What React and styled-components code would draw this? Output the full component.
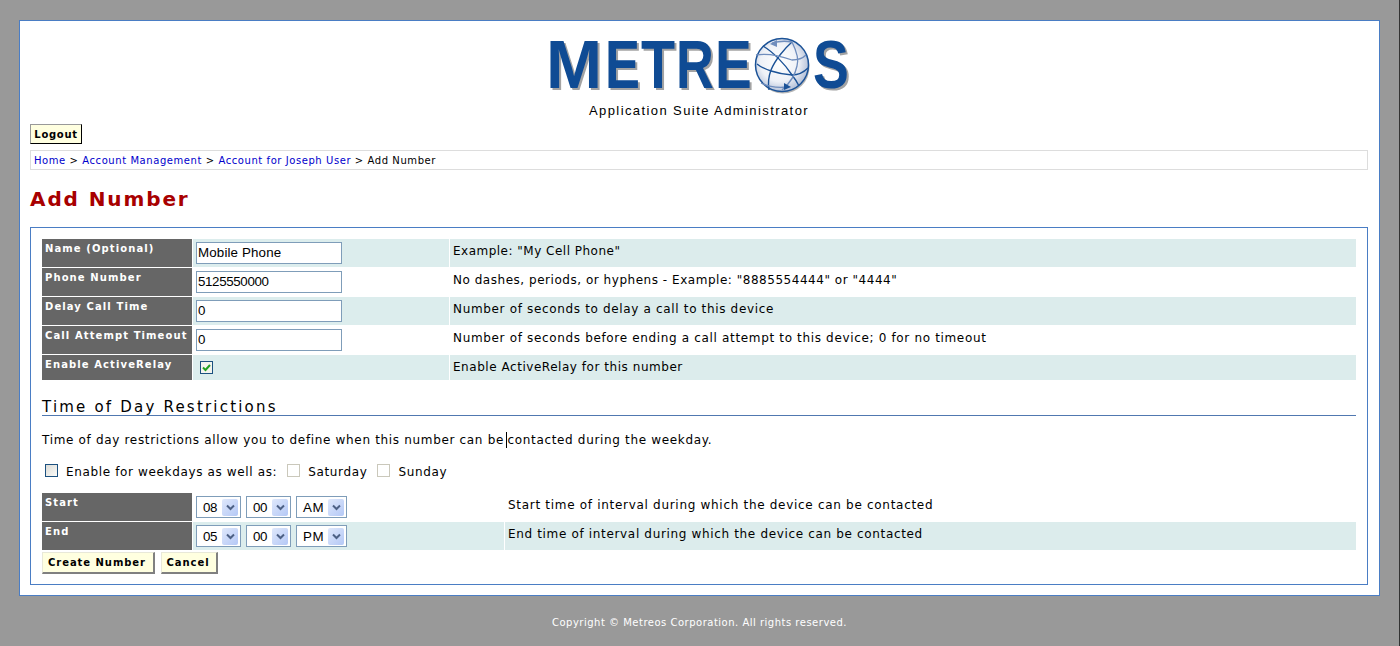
import { Fragment } from "react";
import styled, { createGlobalStyle } from "styled-components";

const GlobalStyle = createGlobalStyle`
  html, body {
    margin: 0;
    padding: 0;
    background: #999999;
    font-family: "DejaVu Sans", Verdana, sans-serif;
    color: #000;
  }
`;

const Page = styled.div`
  height: 646px;
  padding: 20px 19px 0;
  box-sizing: border-box;
  overflow: hidden;
  border-right: 1px solid #333;
`;

const Panel = styled.div`
  height: 576px;
  box-sizing: border-box;
  background: #fff;
  border: 1px solid #4a7dc4;
  padding: 0 11px 0 10px;
`;

const Header = styled.div`
  display: flex;
  flex-direction: column;
  align-items: center;
  height: 103px;
`;

const LogoSvg = styled.svg`
  display: block;
  margin-top: 3px;
`;

const LogoLetters = styled.g`
  filter: drop-shadow(2px 2px 0 #a3a3a3);
`;

const Tagline = styled.div`
  font-family: "Liberation Sans", Arial, sans-serif;
  font-size: 13px;
  line-height: 15px;
  letter-spacing: 1.41px;
  margin-top: -1px;
  white-space: nowrap;
`;

const LogoutButton = styled.button`
  display: block;
  width: 52px;
  height: 20px;
  padding: 0;
  box-sizing: border-box;
  background: #ffffe0;
  border: 1px solid;
  border-color: #999 #000 #000 #999;
  font-family: "DejaVu Sans", Verdana, sans-serif;
  font-size: 10px;
  font-weight: bold;
  letter-spacing: 0.7px;
  color: #000;
`;

const Breadcrumb = styled.div`
  margin-top: 6px;
  height: 20px;
  box-sizing: border-box;
  border: 1px solid #ddd;
  padding-left: 3px;
  font-size: 10px;
  line-height: 20px;
  letter-spacing: 0.57px;
`;

const Crumb = styled.a`
  color: #0000cc;
  text-decoration: none;
`;

const Title = styled.h1`
  margin: 16px 0 0;
  font-size: 20px;
  line-height: 26px;
  letter-spacing: 1.9px;
  font-weight: bold;
  color: #a80000;
`;

const FormBox = styled.div`
  margin-top: 15px;
  height: 358px;
  box-sizing: border-box;
  border: 1px solid #4a7dc4;
  padding: 11px 11px 0 11px;
`;

const FieldTable = styled.div`
  display: grid;
  grid-template-columns: 150px ${(p) => p.$valueWidth}px 1fr;
  grid-auto-rows: 28px;
  gap: 1px;
  background: #fff;
`;

const Label = styled.div`
  background: #666666;
  color: #fff;
  font-size: 10px;
  font-weight: bold;
  letter-spacing: 1.1px;
  line-height: 12px;
  padding: 4px 0 0 3px;
  white-space: nowrap;
  ${(p) => p.$short && "height: 25px; box-sizing: border-box;"}
`;

const ValueCell = styled.div`
  background: ${(p) => (p.$shaded ? "#dceded" : "#fff")};
  display: flex;
  align-items: center;
  gap: 5px;
  padding-left: 3px;
  ${(p) => p.$short && "height: 25px;"}
`;

const HintCell = styled.div`
  background: ${(p) => (p.$shaded ? "#dcecec" : "#fff")};
  font-size: 12px;
  line-height: 24px;
  letter-spacing: ${(p) => p.$tracking ?? 0.66}px;
  padding-left: 3px;
  white-space: nowrap;
  ${(p) => p.$short && "height: 25px;"}
`;

const TextInput = styled.input`
  width: 146px;
  height: 22px;
  box-sizing: border-box;
  border: 1px solid #7f9db9;
  padding: 0 1px 2px 1px;
  margin: 0;
  background: #fff;
  font-family: "Liberation Sans", Arial, sans-serif;
  font-size: 13.33px;
  letter-spacing: ${(p) => p.$tracking}px;
  color: #000;
  outline: none;
`;

const CheckedBox = styled.span`
  display: block;
  width: 13px;
  height: 13px;
  margin-left: 4px;
  box-sizing: border-box;
  border: 1px solid #1c5180;
  background: #f4f4ee;
`;

const CheckMark = styled.svg`
  display: block;
`;

const Section = styled.h2`
  margin: 14px 0 0;
  height: 18px;
  border-bottom: 1px solid #5078b0;
  font-size: 15px;
  font-weight: normal;
  line-height: 20px;
  letter-spacing: 2.2px;
`;

const Paragraph = styled.p`
  margin: 15px 0 0;
  font-size: 12px;
  line-height: 18px;
  letter-spacing: 0.67px;
`;

const Caret = styled.span`
  display: inline-block;
  width: 1px;
  height: 16px;
  margin-left: -2px;
  background: #000;
  vertical-align: -4px;
`;

const OptionsRow = styled.div`
  display: flex;
  align-items: center;
  margin: 13px 0 13px 3px;
  height: 18px;
  font-size: 12px;
  letter-spacing: 0.64px;
`;

const SquareBox = styled.span`
  display: block;
  width: 13px;
  height: 13px;
  box-sizing: border-box;
  border: 1px solid ${(p) => (p.$disabled ? "#cac8bb" : "#1c5180")};
  background: ${(p) =>
    p.$disabled ? "#fff" : "linear-gradient(135deg, #dcdcd7, #fbfbf8)"};
  margin: 0 ${(p) => p.$gap}px 2px 0;
`;

const OptionText = styled.span`
  margin-right: ${(p) => p.$gap}px;
  padding-top: 2px;
`;

const SelectBox = styled.div`
  width: ${(p) => p.$width}px;
  height: 22px;
  box-sizing: border-box;
  border: 1px solid #7f9db9;
  background: #fff;
  display: flex;
  align-items: center;
  justify-content: space-between;
  padding: 0 2px 0 6px;
  font-family: "Liberation Sans", Arial, sans-serif;
  font-size: 13.33px;
  letter-spacing: ${(p) => p.$tracking}px;
`;

const SelectArrow = styled.span`
  width: 16px;
  height: 17px;
  border-radius: 2px;
  background: linear-gradient(135deg, #dfe8fb, #b4c8f6);
  display: flex;
  align-items: center;
  justify-content: center;
`;

const Actions = styled.div`
  display: flex;
  gap: 6px;
  margin-top: 2px;
`;

const ActionButton = styled.button`
  width: ${(p) => p.$width}px;
  height: 22px;
  padding: 0 2px 0 0;
  box-sizing: border-box;
  background: #ffffe0;
  border: 1px solid;
  border-color: #e8e8d8 #808080 #808080 #e8e8d8;
  border-right-width: 2px;
  border-bottom-width: 2px;
  font-family: "DejaVu Sans", Verdana, sans-serif;
  font-size: 10px;
  font-weight: bold;
  letter-spacing: 0.95px;
  color: #000;
`;

const Footer = styled.div`
  margin-top: 20px;
  text-align: center;
  color: #fff;
  font-size: 10px;
  line-height: 14px;
  letter-spacing: 0.5px;
`;

// sx squeezes each wide bold letter to the logo's narrower proportions
const letters = [
  { ch: "M", x: 7, sx: 0.99 },
  { ch: "E", x: 66, sx: 0.77 },
  { ch: "T", x: 102, sx: 0.82 },
  { ch: "R", x: 137, sx: 0.77 },
  { ch: "E", x: 176, sx: 0.81 },
  { ch: "S", x: 274, sx: 0.79 },
];

const Logo = () => (
  <LogoSvg width="320" height="80" viewBox="0 -6 320 80">
    <defs>
      <radialGradient id="globeFill" cx="0.45" cy="0.45" r="0.6">
        <stop offset="0" stopColor="#ffffff" />
        <stop offset="0.6" stopColor="#eef1f7" />
        <stop offset="1" stopColor="#a9b7d2" />
      </radialGradient>
    </defs>
    <LogoLetters>
      {letters.map((l, i) => (
        <text
          key={i}
          transform={`translate(${l.x} 58) scale(${l.sx} 1)`}
          fontFamily="Liberation Sans"
          fontWeight="bold"
          fontSize="68"
          fill="#0f4b94"
        >
          {l.ch}
        </text>
      ))}
    </LogoLetters>
    <circle cx="244" cy="37" r="26.5" fill="#b5b5b5" />
    <circle cx="243" cy="35" r="26.5" fill="url(#globeFill)" stroke="#1b5297" strokeWidth="1.5" />
    <g fill="none" stroke="#1b5297" strokeWidth="1.4">
      <path d="M253 12 C246 18 236 30 232 40 C229 48 229 54 230 60" />
      <path d="M218 34 C224 39 238 44 253 45 C260 45 265 42 269 38" />
      <path d="M224 16 C234 22 246 34 253 45 C257 50 259 54 260 56" />
    </g>
    <g fill="none" stroke="#6f8dbd" strokeWidth="1.3">
      <path d="M217 25 C228 23 242 26 253 30 C259 30 264 28 267 25" />
      <path d="M233 13 C240 11 248 11 253 12 C258 22 260 30 258 36 C256 46 250 54 243 60" />
      <path d="M222 53 C228 56 238 58 248 57" />
    </g>
    <path d="M231 14 l7 -4 l0 7 z" fill="#6f8dbd" />
    <path d="M252 57 l-7 -4 l0 7 z" fill="#1b5297" />
  </LogoSvg>
);

const Select = ({ value, width }) => (
  <SelectBox $width={width} $tracking={/\d/.test(value) ? -0.35 : 0.5}>
    <span>{value}</span>
    <SelectArrow>
      <svg width="9" height="7" viewBox="0 0 9 7">
        <path d="M1 1.5 L4.5 5 L8 1.5" fill="none" stroke="#4d6185" strokeWidth="2" />
      </svg>
    </SelectArrow>
  </SelectBox>
);

const fields = [
  { label: "Name (Optional)", value: "Mobile Phone", tracking: 0.15, hint: 'Example: "My Cell Phone"', hintTracking: 0.49 },
  { label: "Phone Number", value: "5125550000", tracking: -0.35, hint: 'No dashes, periods, or hyphens - Example: "8885554444" or "4444"', hintTracking: 0.53 },
  { label: "Delay Call Time", value: "0", tracking: -0.35, hint: "Number of seconds to delay a call to this device" },
  { label: "Call Attempt Timeout", value: "0", tracking: -0.35, hint: "Number of seconds before ending a call attempt to this device; 0 for no timeout" },
];

const App = () => (
  <Page>
    <GlobalStyle />
    <Panel>
      <Header>
        <Logo />
        <Tagline>Application Suite Administrator</Tagline>
      </Header>
      <LogoutButton>Logout</LogoutButton>
      <Breadcrumb>
        <Crumb href="#">Home</Crumb> &gt; <Crumb href="#">Account Management</Crumb> &gt;{" "}
        <Crumb href="#">Account for Joseph User</Crumb> &gt; Add Number
      </Breadcrumb>
      <Title>Add Number</Title>
      <FormBox>
        <FieldTable $valueWidth={256}>
          {fields.map((f, i) => (
            <Fragment key={f.label}>
              <Label>{f.label}</Label>
              <ValueCell $shaded={i % 2 === 0}>
                <TextInput defaultValue={f.value} $tracking={f.tracking} />
              </ValueCell>
              <HintCell $shaded={i % 2 === 0} $tracking={f.hintTracking}>{f.hint}</HintCell>
            </Fragment>
          ))}
          <Label $short>Enable ActiveRelay</Label>
          <ValueCell $shaded $short>
            <CheckedBox>
              <CheckMark width="11" height="11" viewBox="0 0 11 11">
                <path d="M2 5.5 L4.5 8 L9 3" fill="none" stroke="#21a121" strokeWidth="2" />
              </CheckMark>
            </CheckedBox>
          </ValueCell>
          <HintCell $shaded $short $tracking={0.54}>Enable ActiveRelay for this number</HintCell>
        </FieldTable>
        <Section>Time of Day Restrictions</Section>
        <Paragraph>
          Time of day restrictions allow you to define when this number can be <Caret />
          contacted during the weekday.
        </Paragraph>
        <OptionsRow>
          <SquareBox $gap={8} />
          <OptionText $gap={10}>Enable for weekdays as well as:</OptionText>
          <SquareBox $disabled $gap={8} />
          <OptionText $gap={10}>Saturday</OptionText>
          <SquareBox $disabled $gap={8} />
          <OptionText $gap={0}>Sunday</OptionText>
        </OptionsRow>
        <FieldTable $valueWidth={311}>
          <Label>Start</Label>
          <ValueCell>
            <Select value="08" width={45} />
            <Select value="00" width={45} />
            <Select value="AM" width={51} />
          </ValueCell>
          <HintCell $tracking={0.7}>Start time of interval during which the device can be contacted</HintCell>
          <Label>End</Label>
          <ValueCell $shaded>
            <Select value="05" width={45} />
            <Select value="00" width={45} />
            <Select value="PM" width={51} />
          </ValueCell>
          <HintCell $shaded>End time of interval during which the device can be contacted</HintCell>
        </FieldTable>
        <Actions>
          <ActionButton $width={113}>Create Number</ActionButton>
          <ActionButton $width={57}>Cancel</ActionButton>
        </Actions>
      </FormBox>
    </Panel>
    <Footer>Copyright © Metreos Corporation. All rights reserved.</Footer>
  </Page>
);

export default App;
